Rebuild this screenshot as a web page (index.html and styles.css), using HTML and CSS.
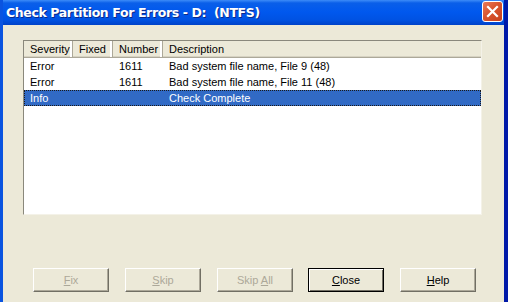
FILE: index.html
```html
<!DOCTYPE html>
<html lang="en">
<head>
    <meta charset="UTF-8" />
    <title>Check Partition For Errors</title>
    <link rel="stylesheet" href="styles.css">
</head>
<body>

    <div class="window">
        <div class="titlebar">
            <span class="title">Check Partition For Errors - D:&nbsp; (NTFS)</span>
            <button class="close-x" aria-label="Close">
                <svg width="13" height="13" viewBox="0 0 13 13">
                    <path d="M2 2 L11 11 M11 2 L2 11" stroke="#fff" stroke-width="2.2" stroke-linecap="square" />
                </svg>
            </button>
        </div>

        <div class="client">
            <div class="listbox">
                <div class="row header">
                    <div class="col c-sev">Severity</div>
                    <div class="col c-fix">Fixed</div>
                    <div class="col c-num">Number</div>
                    <div class="col c-desc">Description</div>
                </div>
                <div class="row">
                    <div class="col c-sev">Error</div>
                    <div class="col c-fix"></div>
                    <div class="col c-num">1611</div>
                    <div class="col c-desc">Bad system file name, File 9 (48)</div>
                </div>
                <div class="row">
                    <div class="col c-sev">Error</div>
                    <div class="col c-fix"></div>
                    <div class="col c-num">1611</div>
                    <div class="col c-desc">Bad system file name, File 11 (48)</div>
                </div>
                <div class="row selected">
                    <div class="col c-sev">Info</div>
                    <div class="col c-fix"></div>
                    <div class="col c-num"></div>
                    <div class="col c-desc">Check Complete</div>
                </div>
            </div>

            <div class="buttons">
                <button class="btn" disabled><u>F</u>ix</button>
                <button class="btn" disabled><u>S</u>kip</button>
                <button class="btn" disabled>Skip <u>A</u>ll</button>
                <button class="btn default"><u>C</u>lose</button>
                <button class="btn help"><u>H</u>elp</button>
            </div>
        </div>
    </div>

</body>
</html>
```

FILE: styles.css
```css
body {
    margin: 0;
    font-family: "Liberation Sans", Arial, sans-serif;
    font-size: 11px;
    background: #ece9d8;
}

.window {
    width: 508px;
    height: 302px;
    display: flex;
    flex-direction: column;
    box-sizing: border-box;
    border-left: 3px solid #0a54e0;
    border-right: 4px solid #0019a8;
    background: #ece9d8;
    overflow: hidden;
}

.titlebar {
    height: 25px;
    flex: none;
    margin-left: -3px;
    margin-right: -4px;
    display: flex;
    align-items: center;
    justify-content: space-between;
    padding: 0 5px 0 6px;
    background: linear-gradient(to bottom, #3d8cf8 0px, #0a5fe9 3px, #0058ee 12px, #0052e2 20px, #0042c8 25px);
}

.title {
    color: #fff;
    font-family: "DejaVu Sans", sans-serif;
    font-weight: bold;
    font-size: 12.5px;
    letter-spacing: -0.38px;
    text-shadow: 1px 1px 0 #0a2a8a;
    padding-bottom: 1px;
}

.close-x {
    width: 21px;
    height: 21px;
    padding: 0;
    border: 1px solid #fff;
    border-radius: 3px;
    background: linear-gradient(135deg, #e97a5a 0%, #d9542e 45%, #c6401c 100%);
    display: flex;
    align-items: center;
    justify-content: center;
    margin-top: -2px;
}

.client {
    flex: 1;
    display: flex;
    flex-direction: column;
    padding: 15px 0 0 20px;
}

.listbox {
    width: 459px;
    height: 175px;
    box-sizing: border-box;
    background: #fff;
    border-top: 1px solid #8a887c;
    border-left: 1px solid #8a887c;
    border-right: 1px solid #f4f2e8;
    border-bottom: 1px solid #f4f2e8;
}

.row {
    display: flex;
    height: 16px;
    align-items: center;
    color: #000;
}

.header {
    height: 16px;
    background: #ece9d8;
    border-bottom: 1px solid #aca899;
    box-shadow: inset 0 -1px 0 #d6d2c2;
}

.col {
    box-sizing: border-box;
    padding-left: 6px;
    white-space: nowrap;
    overflow: hidden;
}

.c-sev { width: 49px; }
.c-fix { width: 40px; }
.c-num { width: 50px; }
.c-desc { flex: 1; }

.header .col {
    height: 16px;
    line-height: 16px;
    border-right: 1px solid #aca899;
    box-shadow: inset -2px 0 0 #fff;
}

.header .c-desc {
    border-right: none;
    box-shadow: none;
}

.selected {
    background: #316ac5;
    color: #fff;
    outline: 1px dotted #1a1a1a;
    outline-offset: -1px;
}

.buttons {
    display: flex;
    gap: 16px;
    margin-top: 53px;
    padding-left: 10px;
}

.btn {
    width: 76px;
    height: 24px;
    padding: 0;
    margin: 0;
    font-family: "Liberation Sans", Arial, sans-serif;
    font-size: 11px;
    color: #000;
    background: #ece9d8;
    border: 1px solid;
    border-color: #fff #716f64 #716f64 #fff;
    box-shadow: inset -1px -1px 0 #aca899;
    border-radius: 0;
}

.btn:disabled {
    color: #aca899;
}

.btn.default {
    border-color: #000;
    box-shadow: inset 1px 1px 0 #fff, inset -1px -1px 0 #716f64;
    margin-left: -1px;
    margin-right: -1px;
}

.btn.help {
    margin-left: 1px;
}
```
